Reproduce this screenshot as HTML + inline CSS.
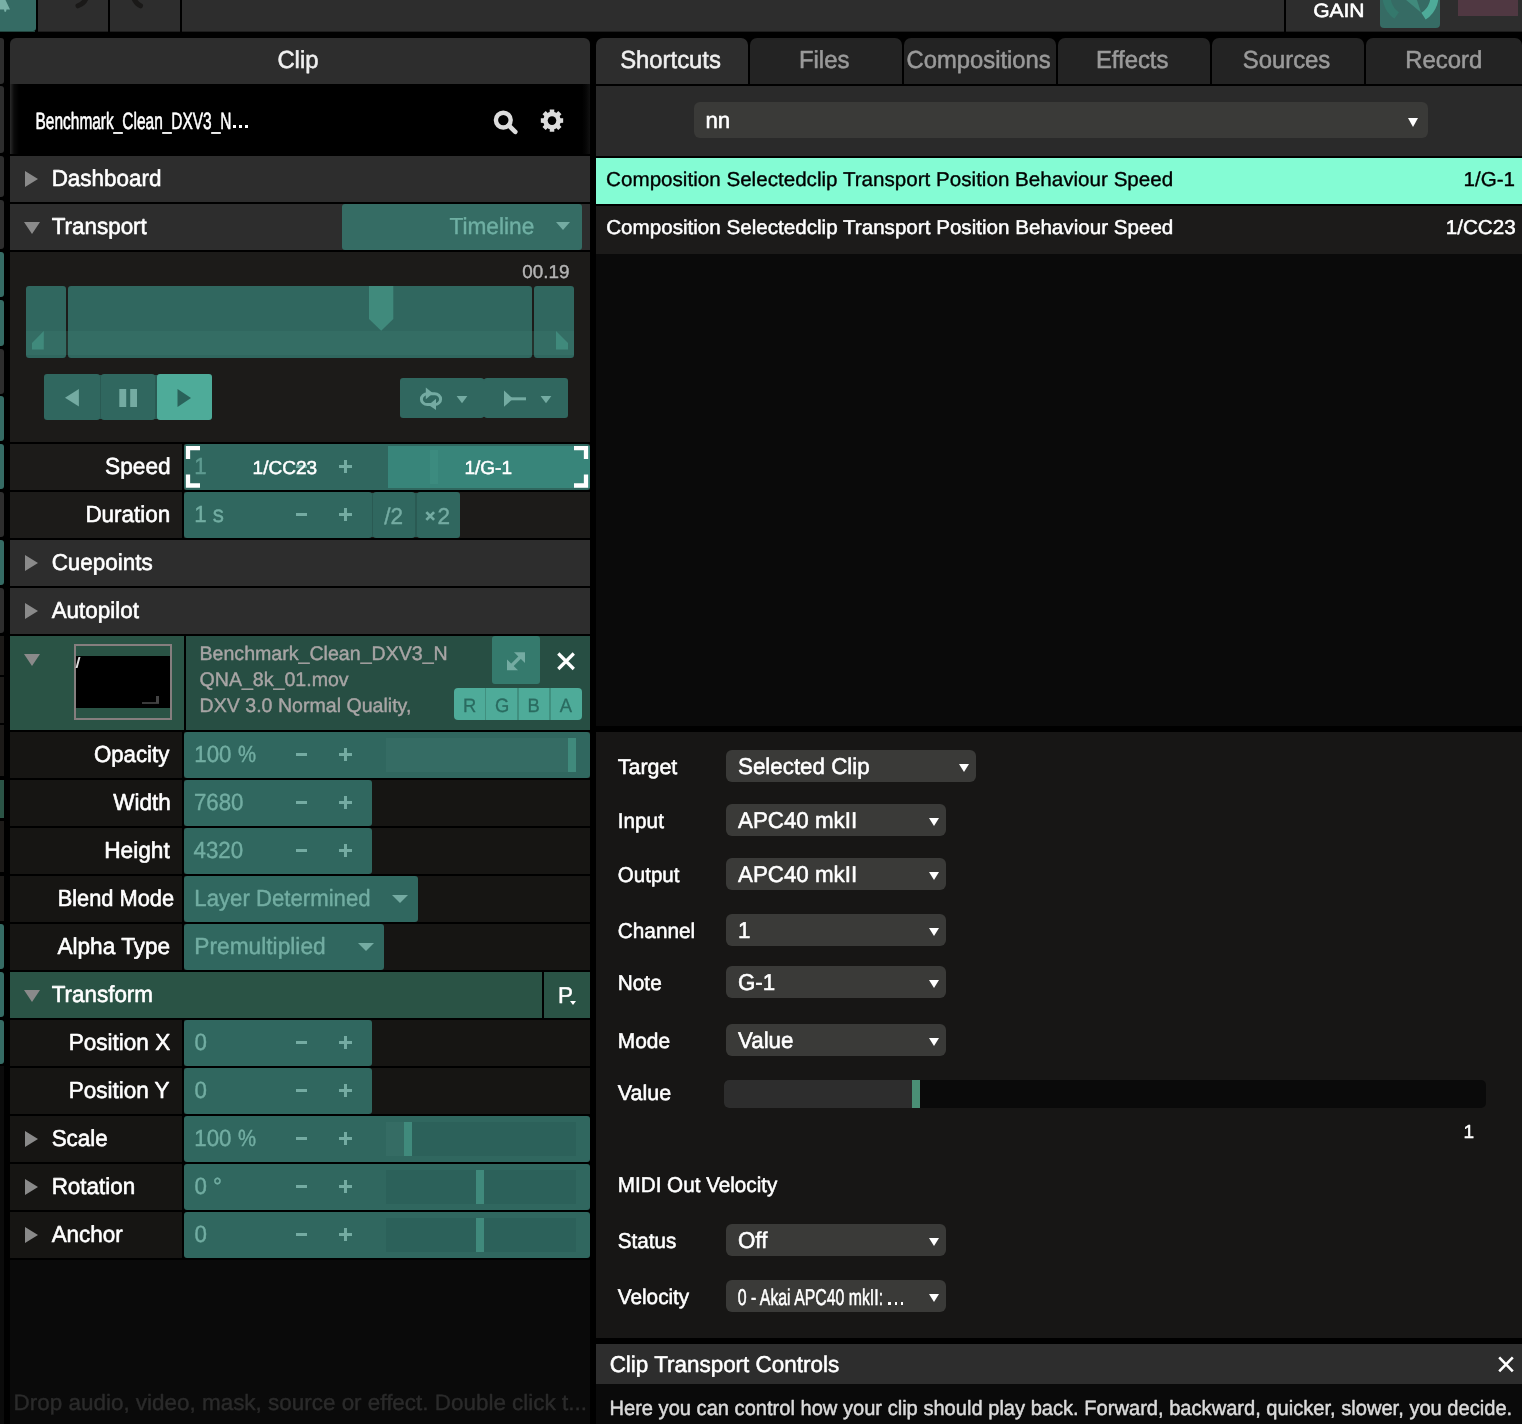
<!DOCTYPE html>
<html>
<head>
<meta charset="utf-8">
<title>Clip</title>
<style>
html,body{margin:0;padding:0;background:#000;}
body{width:1522px;height:1424px;position:relative;overflow:hidden;font-family:"Liberation Sans",sans-serif;}
.a{position:absolute;}
.tri-r{position:absolute;width:0;height:0;border-left:13px solid #8a8a8a;border-top:8px solid transparent;border-bottom:8px solid transparent;}
.tri-d{position:absolute;width:0;height:0;border-top:12px solid #8a8a8a;border-left:8px solid transparent;border-right:8px solid transparent;}
svg.tx{position:absolute;left:0;top:0;will-change:transform;font-family:"Liberation Sans",sans-serif;text-rendering:geometricPrecision;stroke-linejoin:round;}
svg.tx text{white-space:pre;}
</style>
</head>
<body>
<div class="a" style="left:0px;top:31px;width:35px;height:1px;background:#22463f;"></div>
<div class="a" style="left:0px;top:0px;width:36px;height:31px;background:#356b64;border-radius:0 0 3px 0;"></div>
<svg class="a" style="left:0;top:0" width="36" height="32"><path d="M0 0 L5.5 0 L10 9.5 L6.5 9.5 L6 11.8 L4.5 11.8 L4 9.5 L0 9.5 Z" fill="#78b0a6"/></svg>
<div class="a" style="left:38px;top:0px;width:70px;height:31px;background:#2d2d2d;"></div>
<div class="a" style="left:110px;top:0px;width:70px;height:31px;background:#2d2d2d;"></div>
<div class="a" style="left:182px;top:0px;width:1102px;height:31px;background:#2d2d2d;"></div>
<div class="a" style="left:1286px;top:0px;width:236px;height:31px;background:#2d2d2d;"></div>
<div class="a" style="left:38px;top:31px;width:70px;height:1px;background:#1d1d1d;"></div>
<div class="a" style="left:110px;top:31px;width:70px;height:1px;background:#1d1d1d;"></div>
<div class="a" style="left:182px;top:31px;width:1102px;height:1px;background:#1d1d1d;"></div>
<div class="a" style="left:1286px;top:31px;width:236px;height:1px;background:#1d1d1d;"></div>
<svg class="a" style="left:38px;top:0" width="144" height="32"><path d="M40 5.8 Q47 3 48.5 -3" stroke="#1a1918" stroke-width="5" fill="none" stroke-linecap="round"/><path d="M95.5 -3 Q97 3 102.5 5.8" stroke="#1a1918" stroke-width="5" fill="none" stroke-linecap="round"/></svg>
<div class="a" style="left:1380px;top:0;width:60px;height:28px;background:#366b64;border-radius:0 0 4px 4px;overflow:hidden;"><svg width="60" height="28"><path d="M16.63 15.59 A24 24 0 0 1 7.95 -12.2" stroke="#34786c" stroke-width="8" fill="none"/><path d="M43.5 16.17 A24 24 0 0 0 53.05 -12.2" stroke="#4eab99" stroke-width="8" fill="none"/><path d="M24.9 -1 L36.6 -1 L41 12.4 Z" fill="#408a7c"/></svg></div>
<div class="a" style="left:1458px;top:0px;width:60px;height:16px;background:#503842;"></div>
<div class="a" style="left:0px;top:38px;width:3.7px;height:46px;background:#2d2d2d;border-radius:0 3px 3px 0;"></div>
<div class="a" style="left:0px;top:86px;width:3.7px;height:67px;background:#2d2d2d;border-radius:0 3px 3px 0;"></div>
<div class="a" style="left:0px;top:156px;width:3.7px;height:41px;background:#2d2d2d;border-radius:0 3px 3px 0;"></div>
<div class="a" style="left:0px;top:200px;width:3.7px;height:49px;background:#2d2d2d;border-radius:0 3px 3px 0;"></div>
<div class="a" style="left:0px;top:252px;width:3.7px;height:45px;background:#356b64;border-radius:0 3px 3px 0;"></div>
<div class="a" style="left:0px;top:300px;width:3.7px;height:46px;background:#356b64;border-radius:0 3px 3px 0;"></div>
<div class="a" style="left:0px;top:349px;width:3.7px;height:45px;background:#2d2d2d;border-radius:0 3px 3px 0;"></div>
<div class="a" style="left:0px;top:396px;width:3.7px;height:45px;background:#356b64;border-radius:0 3px 3px 0;"></div>
<div class="a" style="left:0px;top:444px;width:3.7px;height:45px;background:#356b64;border-radius:0 3px 3px 0;"></div>
<div class="a" style="left:0px;top:492px;width:3.7px;height:45px;background:#2d2d2d;border-radius:0 3px 3px 0;"></div>
<div class="a" style="left:0px;top:540px;width:3.7px;height:45px;background:#356b64;border-radius:0 3px 3px 0;"></div>
<div class="a" style="left:0px;top:588px;width:3.7px;height:45px;background:#2d2d2d;border-radius:0 3px 3px 0;"></div>
<div class="a" style="left:0px;top:636px;width:3.7px;height:39px;background:#1c1a18;"></div>
<div class="a" style="left:0px;top:677px;width:3.7px;height:46px;background:#1c1a18;"></div>
<div class="a" style="left:0px;top:725px;width:3.7px;height:51px;background:#1c1a18;"></div>
<div class="a" style="left:0px;top:780px;width:3.7px;height:38px;background:#2a5345;"></div>
<div class="a" style="left:0px;top:821px;width:3.7px;height:51px;background:#1c1a18;"></div>
<div class="a" style="left:0px;top:876px;width:3.7px;height:45px;background:#1c1a18;"></div>
<div class="a" style="left:0px;top:924px;width:3.7px;height:45px;background:#356b64;border-radius:0 3px 3px 0;"></div>
<div class="a" style="left:0px;top:972px;width:3.7px;height:45px;background:#356b64;border-radius:0 3px 3px 0;"></div>
<div class="a" style="left:0px;top:1020px;width:3.7px;height:44px;background:#356b64;border-radius:0 3px 3px 0;"></div>
<div class="a" style="left:0px;top:1066px;width:3.7px;height:358px;background:#0b0b0b;"></div>
<div class="a" style="left:10px;top:38px;width:580px;height:46px;background:#2d2d2d;border-radius:6px 6px 0 0;"></div>
<div class="a" style="left:10px;top:84px;width:580px;height:70px;background:linear-gradient(90deg,#2a2a2a 0,#0a0a0a 4px,#000 9px,#000 572px,#060606 576px,#111 580px);"></div>
<div class="a" style="left:232.5px;top:125.1px;width:3.2px;height:3.0px;background:#fff;"></div>
<div class="a" style="left:238.9px;top:125.1px;width:3.2px;height:3.0px;background:#fff;"></div>
<div class="a" style="left:245.1px;top:125.1px;width:3.2px;height:3.0px;background:#fff;"></div>
<svg class="a" style="left:488px;top:104px" width="84" height="34"><circle cx="15.3" cy="16.1" r="7.4" fill="none" stroke="#dcdcdc" stroke-width="4.4"/><path d="M20.8 21.5 L27.3 27.8" stroke="#dcdcdc" stroke-width="4.6" stroke-linecap="round"/><path d="M61.71 8.31 L61.74 5.43 L66.26 5.43 L66.29 8.31 L68.24 9.12 L70.30 7.10 L73.50 10.30 L71.48 12.36 L72.29 14.31 L75.17 14.34 L75.17 18.86 L72.29 18.89 L71.48 20.84 L73.50 22.90 L70.30 26.10 L68.24 24.08 L66.29 24.89 L66.26 27.77 L61.74 27.77 L61.71 24.89 L59.76 24.08 L57.70 26.10 L54.50 22.90 L56.52 20.84 L55.71 18.89 L52.83 18.86 L52.83 14.34 L55.71 14.31 L56.52 12.36 L54.50 10.30 L57.70 7.10 L59.76 9.12 Z" fill="#dcdcdc"/><circle cx="64" cy="16.6" r="8.8" fill="#dcdcdc"/><circle cx="64" cy="16.6" r="4.3" fill="#000"/></svg>
<div class="a" style="left:10px;top:156px;width:580px;height:46px;background:#2d2d2d;"></div>
<i class="tri-r" style="left:25px;top:170.5px;"></i>
<div class="a" style="left:10px;top:204px;width:580px;height:46px;background:#2d2d2d;"></div>
<i class="tri-d" style="left:23.5px;top:222px;"></i>
<div class="a" style="left:342px;top:204px;width:240px;height:46px;background:#356c64;border-radius:3px;"></div>
<i class="a" style="left:556px;top:222px;width:0;height:0;border-top:8.2px solid #74aba2;border-left:7.8px solid transparent;border-right:7.8px solid transparent;"></i>
<div class="a" style="left:10px;top:252px;width:580px;height:190px;background:#1c1b19;"></div>
<div class="a" style="left:26px;top:286px;width:40px;height:72px;background:#30675f;border-radius:3px;"></div>
<div class="a" style="left:68px;top:286px;width:464px;height:72px;background:#30675f;border-radius:3px;"></div>
<div class="a" style="left:534px;top:286px;width:40px;height:72px;background:#30675f;border-radius:3px;"></div>
<div class="a" style="left:26px;top:331px;width:548px;height:23.5px;background:rgba(70,130,118,0.22);"></div>
<svg class="a" style="left:26px;top:286px" width="548" height="72"><path d="M343 0 L367.3 0 L367.3 33 L355.2 44.7 L343 33 Z" fill="#408a7c"/><path d="M6 63.6 L17.8 63.6 L17.8 45 L6 57 Z" fill="#408a7c"/><path d="M530 45 L542 57 L542 63.6 L530 63.6 Z" fill="#408a7c"/></svg>
<div class="a" style="left:90px;top:375px;width:80px;height:44px;background:#2a5a53;"></div>
<div class="a" style="left:44px;top:374px;width:55.6px;height:46px;background:#30675f;border-radius:3px;"></div>
<div class="a" style="left:101px;top:374px;width:54.4px;height:46px;background:#30675f;border-radius:3px;"></div>
<div class="a" style="left:156.8px;top:374px;width:55.2px;height:46px;background:#4eab99;border-radius:3px;"></div>
<svg class="a" style="left:44px;top:374px" width="170" height="46"><path d="M34.9 15 L34.9 32.6 L21 23.8 Z" fill="#74aba2"/><rect x="75.3" y="15" width="6.9" height="18" fill="#74aba2"/><rect x="86.2" y="15" width="6.8" height="18" fill="#74aba2"/><path d="M133.5 15 L147 24 L133.5 33 Z" fill="#2a625a"/></svg>
<div class="a" style="left:478px;top:379px;width:12px;height:38px;background:#2a5a53;"></div>
<div class="a" style="left:400px;top:378px;width:83.6px;height:40px;background:#30675f;border-radius:3px;"></div>
<div class="a" style="left:484.4px;top:378px;width:83.6px;height:40px;background:#30675f;border-radius:3px;"></div>
<svg class="a" style="left:400px;top:378px" width="168" height="40"><rect x="21.4" y="15.7" width="19.2" height="10.9" rx="6" ry="5.45" fill="none" stroke="#74aba2" stroke-width="3"/><path d="M25.8 9.4 L33 15.2 L25.8 21.2 Z" fill="#74aba2"/><path d="M36 20.8 L36 32.1 L28.6 27 Z" fill="#74aba2"/><path d="M56.6 18 L67.4 18 L62 25.2 Z" fill="#74aba2"/><path d="M104 12.6 L113 20.8 L104 28.8 Z" fill="#74aba2"/><rect x="111" y="19.3" width="15" height="3" fill="#74aba2"/><path d="M140.6 18 L151.4 18 L146 25.2 Z" fill="#74aba2"/></svg>
<div class="a" style="left:10px;top:444px;width:172px;height:46px;background:#1c1b19;"></div>
<div class="a" style="left:184px;top:444px;width:406px;height:46px;background:#1c1b19;"></div>
<div class="a" style="left:184px;top:444px;width:406px;height:46px;background:#30675f;border-radius:3px;"></div>
<div class="a" style="left:387.9px;top:446px;width:202px;height:41.8px;background:#38857a;"></div>
<div class="a" style="left:429.8px;top:450px;width:8.3px;height:34px;background:#3c8b7f;"></div>
<div class="a" style="left:296.1px;top:465.0px;width:11px;height:3px;background:#74aba2;"></div>
<div class="a" style="left:339.0px;top:465.0px;width:13px;height:3px;background:#74aba2;"></div>
<div class="a" style="left:344.0px;top:460.0px;width:3px;height:13px;background:#74aba2;"></div>
<svg class="a" style="left:184px;top:444px" width="406" height="46"><g fill="none" stroke="#fff" stroke-width="4.3"><path d="M16 4.2 L4 4.2 L4 15"/><path d="M4 30.4 L4 41.5 L16 41.5"/><path d="M390 4.2 L402 4.2 L402 15"/><path d="M402 30.4 L402 41.5 L390 41.5"/></g></svg>
<div class="a" style="left:10px;top:492px;width:172px;height:46px;background:#1c1b19;"></div>
<div class="a" style="left:184px;top:492px;width:406px;height:46px;background:#1c1b19;"></div>
<div class="a" style="left:366px;top:493px;width:56px;height:44px;background:#2a5a53;"></div>
<div class="a" style="left:184px;top:492px;width:188px;height:46px;background:#30675f;border-radius:3px;"></div>
<div class="a" style="left:295.9px;top:513.0px;width:11px;height:3px;background:#74aba2;"></div>
<div class="a" style="left:339.1px;top:513.0px;width:13px;height:3px;background:#74aba2;"></div>
<div class="a" style="left:344.1px;top:508.0px;width:3px;height:13px;background:#74aba2;"></div>
<div class="a" style="left:373px;top:492px;width:42.4px;height:46px;background:#30675f;border-radius:3px;"></div>
<div class="a" style="left:416.6px;top:492px;width:43.4px;height:46px;background:#30675f;border-radius:3px;"></div>
<svg class="a" style="left:420px;top:505px" width="20" height="22"><path d="M6.3 7.1 L14.1 14.9 M14.1 7.1 L6.3 14.9" stroke="#74aba2" stroke-width="2.7"/></svg>
<div class="a" style="left:10px;top:540px;width:580px;height:46px;background:#2d2d2d;"></div>
<i class="tri-r" style="left:25px;top:554.5px;"></i>
<div class="a" style="left:10px;top:588px;width:580px;height:46px;background:#2d2d2d;"></div>
<i class="tri-r" style="left:25px;top:602.5px;"></i>
<div class="a" style="left:10px;top:636px;width:174px;height:94px;background:#2a5345;"></div>
<div class="a" style="left:186px;top:636px;width:404px;height:94px;background:#274e43;"></div>
<i class="tri-d" style="left:24px;top:654px;"></i>
<div class="a" style="left:74px;top:644px;width:94px;height:72px;border:2px solid #857e7e;"><div class="a" style="left:0;top:10px;width:94px;height:52px;background:#000;"></div><div class="a" style="left:1px;top:11px;width:2px;height:11px;background:#ddd;transform:skewX(-15deg);"></div><div class="a" style="left:66px;top:56px;width:17px;height:2px;background:#3a3a3a;"></div><div class="a" style="left:80px;top:50px;width:2.5px;height:7px;background:#444;"></div></div>
<div class="a" style="left:492px;top:636px;width:48px;height:48px;background:#357a6d;border-radius:3px;"></div>
<svg class="a" style="left:492px;top:636px" width="100" height="50"><g fill="#74aba2"><path d="M33 16.2 L33 27 L22 16.2 Z"/><path d="M15 34.2 L15 23.4 L26 34.2 Z"/></g><path d="M18.5 30.7 L29.5 19.7" stroke="#74aba2" stroke-width="3.4"/><path d="M66.3 17.5 L81.8 33 M81.8 17.5 L66.3 33" stroke="#fff" stroke-width="3.2"/></svg>
<div class="a" style="left:454.3px;top:688px;width:127.6px;height:31.6px;background:#4eab99;border-radius:4px;"></div>
<div class="a" style="left:484.8px;top:688px;width:1.4px;height:31.6px;background:#40907f;"></div>
<div class="a" style="left:517.1999999999999px;top:688px;width:1.4px;height:31.6px;background:#40907f;"></div>
<div class="a" style="left:549.1999999999999px;top:688px;width:1.4px;height:31.6px;background:#40907f;"></div>
<div class="a" style="left:10px;top:732px;width:172px;height:46px;background:#161513;"></div>
<div class="a" style="left:184px;top:732px;width:406px;height:46px;background:#161513;"></div>
<div class="a" style="left:184px;top:732px;width:406px;height:46px;background:#30675f;border-radius:3px;"></div>
<div class="a" style="left:295.9px;top:753.0px;width:11px;height:3px;background:#74aba2;"></div>
<div class="a" style="left:339.1px;top:753.0px;width:13px;height:3px;background:#74aba2;"></div>
<div class="a" style="left:344.1px;top:748.0px;width:3px;height:13px;background:#74aba2;"></div>
<div class="a" style="left:385.6px;top:738px;width:190.4px;height:34px;background:#356c64;"></div>
<div class="a" style="left:567.7px;top:738px;width:8.2px;height:34px;background:#408a7c;"></div>
<div class="a" style="left:10px;top:780px;width:172px;height:46px;background:#161513;"></div>
<div class="a" style="left:184px;top:780px;width:406px;height:46px;background:#161513;"></div>
<div class="a" style="left:184px;top:780px;width:188px;height:46px;background:#30675f;border-radius:3px;"></div>
<div class="a" style="left:295.9px;top:801.0px;width:11px;height:3px;background:#74aba2;"></div>
<div class="a" style="left:339.1px;top:801.0px;width:13px;height:3px;background:#74aba2;"></div>
<div class="a" style="left:344.1px;top:796.0px;width:3px;height:13px;background:#74aba2;"></div>
<div class="a" style="left:10px;top:828px;width:172px;height:46px;background:#161513;"></div>
<div class="a" style="left:184px;top:828px;width:406px;height:46px;background:#161513;"></div>
<div class="a" style="left:184px;top:828px;width:188px;height:46px;background:#30675f;border-radius:3px;"></div>
<div class="a" style="left:295.9px;top:849.0px;width:11px;height:3px;background:#74aba2;"></div>
<div class="a" style="left:339.1px;top:849.0px;width:13px;height:3px;background:#74aba2;"></div>
<div class="a" style="left:344.1px;top:844.0px;width:3px;height:13px;background:#74aba2;"></div>
<div class="a" style="left:10px;top:876px;width:172px;height:46px;background:#161513;"></div>
<div class="a" style="left:184px;top:876px;width:406px;height:46px;background:#161513;"></div>
<div class="a" style="left:184px;top:876px;width:234px;height:46px;background:#30675f;border-radius:3px;"></div>
<i class="a" style="left:392px;top:894.5px;width:0;height:0;border-top:8px solid #74aba2;border-left:8px solid transparent;border-right:8px solid transparent;"></i>
<div class="a" style="left:10px;top:924px;width:172px;height:46px;background:#161513;"></div>
<div class="a" style="left:184px;top:924px;width:406px;height:46px;background:#161513;"></div>
<div class="a" style="left:184px;top:924px;width:199.5px;height:46px;background:#30675f;border-radius:3px;"></div>
<i class="a" style="left:357.5px;top:942.5px;width:0;height:0;border-top:8px solid #74aba2;border-left:8px solid transparent;border-right:8px solid transparent;"></i>
<div class="a" style="left:10px;top:972px;width:532px;height:46px;background:#2a5345;"></div>
<i class="tri-d" style="left:23.5px;top:990px;"></i>
<div class="a" style="left:544px;top:972px;width:46px;height:46px;background:#2a5345;"></div>
<i class="a" style="left:569.5px;top:1000.5px;width:0;height:0;border-top:4px solid #fff;border-left:3px solid transparent;border-right:3px solid transparent;"></i>
<div class="a" style="left:10px;top:1020px;width:172px;height:46px;background:#161513;"></div>
<div class="a" style="left:184px;top:1020px;width:406px;height:46px;background:#161513;"></div>
<div class="a" style="left:184px;top:1020px;width:188px;height:46px;background:#30675f;border-radius:3px;"></div>
<div class="a" style="left:295.9px;top:1041.0px;width:11px;height:3px;background:#74aba2;"></div>
<div class="a" style="left:339.1px;top:1041.0px;width:13px;height:3px;background:#74aba2;"></div>
<div class="a" style="left:344.1px;top:1036.0px;width:3px;height:13px;background:#74aba2;"></div>
<div class="a" style="left:10px;top:1068px;width:172px;height:46px;background:#161513;"></div>
<div class="a" style="left:184px;top:1068px;width:406px;height:46px;background:#161513;"></div>
<div class="a" style="left:184px;top:1068px;width:188px;height:46px;background:#30675f;border-radius:3px;"></div>
<div class="a" style="left:295.9px;top:1089.0px;width:11px;height:3px;background:#74aba2;"></div>
<div class="a" style="left:339.1px;top:1089.0px;width:13px;height:3px;background:#74aba2;"></div>
<div class="a" style="left:344.1px;top:1084.0px;width:3px;height:13px;background:#74aba2;"></div>
<div class="a" style="left:10px;top:1116px;width:172px;height:46px;background:#161513;"></div>
<i class="tri-r" style="left:25px;top:1130.5px;"></i>
<div class="a" style="left:184px;top:1116px;width:406px;height:46px;background:#30675f;border-radius:3px;"></div>
<div class="a" style="left:295.9px;top:1137.0px;width:11px;height:3px;background:#74aba2;"></div>
<div class="a" style="left:339.1px;top:1137.0px;width:13px;height:3px;background:#74aba2;"></div>
<div class="a" style="left:344.1px;top:1132.0px;width:3px;height:13px;background:#74aba2;"></div>
<div class="a" style="left:385.5px;top:1122px;width:190px;height:34px;background:#2c615a;"></div>
<div class="a" style="left:385.5px;top:1122px;width:18.5px;height:34px;background:#356c64;"></div>
<div class="a" style="left:404px;top:1122px;width:8.2px;height:34px;background:#408a7c;"></div>
<div class="a" style="left:10px;top:1164px;width:172px;height:46px;background:#161513;"></div>
<i class="tri-r" style="left:25px;top:1178.5px;"></i>
<div class="a" style="left:184px;top:1164px;width:406px;height:46px;background:#30675f;border-radius:3px;"></div>
<div class="a" style="left:295.9px;top:1185.0px;width:11px;height:3px;background:#74aba2;"></div>
<div class="a" style="left:339.1px;top:1185.0px;width:13px;height:3px;background:#74aba2;"></div>
<div class="a" style="left:344.1px;top:1180.0px;width:3px;height:13px;background:#74aba2;"></div>
<div class="a" style="left:385.5px;top:1170px;width:190px;height:34px;background:#2c615a;"></div>
<div class="a" style="left:475.8px;top:1170px;width:8.2px;height:34px;background:#408a7c;"></div>
<div class="a" style="left:10px;top:1212px;width:172px;height:46px;background:#161513;"></div>
<i class="tri-r" style="left:25px;top:1226.5px;"></i>
<div class="a" style="left:184px;top:1212px;width:406px;height:46px;background:#30675f;border-radius:3px;"></div>
<div class="a" style="left:295.9px;top:1233.0px;width:11px;height:3px;background:#74aba2;"></div>
<div class="a" style="left:339.1px;top:1233.0px;width:13px;height:3px;background:#74aba2;"></div>
<div class="a" style="left:344.1px;top:1228.0px;width:3px;height:13px;background:#74aba2;"></div>
<div class="a" style="left:385.5px;top:1218px;width:190px;height:34px;background:#2c615a;"></div>
<div class="a" style="left:475.8px;top:1218px;width:8.2px;height:34px;background:#408a7c;"></div>
<div class="a" style="left:10px;top:1260px;width:580px;height:164px;background:#0a0a0a;"></div>
<div class="a" style="left:596px;top:38px;width:152px;height:46px;background:#2d2d2d;border-radius:7px 7px 0 0;"></div>
<div class="a" style="left:750px;top:38px;width:152px;height:46px;background:#232323;border-radius:7px 7px 0 0;"></div>
<div class="a" style="left:904px;top:38px;width:152px;height:46px;background:#232323;border-radius:7px 7px 0 0;"></div>
<div class="a" style="left:1058px;top:38px;width:152px;height:46px;background:#232323;border-radius:7px 7px 0 0;"></div>
<div class="a" style="left:1212px;top:38px;width:152px;height:46px;background:#232323;border-radius:7px 7px 0 0;"></div>
<div class="a" style="left:1366px;top:38px;width:156px;height:46px;background:#232323;border-radius:7px 7px 0 0;"></div>
<div class="a" style="left:596px;top:86px;width:926px;height:70px;background:#2a2a2a;"></div>
<div class="a" style="left:694px;top:102px;width:733.7px;height:36px;background:#3a3a38;border-radius:6px;"></div>
<i class="a" style="left:1408px;top:117.5px;width:0;height:0;border-top:9px solid #fff;border-left:5.8px solid transparent;border-right:5.8px solid transparent;"></i>
<div class="a" style="left:596px;top:158px;width:926px;height:46px;background:#84fcd4;"></div>
<div class="a" style="left:596px;top:206px;width:926px;height:48px;background:#1c1b1a;"></div>
<div class="a" style="left:596px;top:254px;width:926px;height:472px;background:#0a0a0a;"></div>
<div class="a" style="left:596px;top:732px;width:926px;height:606px;background:#171615;"></div>
<div class="a" style="left:726px;top:750px;width:250px;height:32px;background:#3a3a38;border-radius:6px;"></div>
<i class="a" style="left:959px;top:764px;width:0;height:0;border-top:8px solid #fff;border-left:5px solid transparent;border-right:5px solid transparent;"></i>
<div class="a" style="left:726px;top:804px;width:220px;height:32px;background:#3a3a38;border-radius:6px;"></div>
<i class="a" style="left:929px;top:818px;width:0;height:0;border-top:8px solid #fff;border-left:5px solid transparent;border-right:5px solid transparent;"></i>
<div class="a" style="left:726px;top:858px;width:220px;height:32px;background:#3a3a38;border-radius:6px;"></div>
<i class="a" style="left:929px;top:872px;width:0;height:0;border-top:8px solid #fff;border-left:5px solid transparent;border-right:5px solid transparent;"></i>
<div class="a" style="left:726px;top:914px;width:220px;height:32px;background:#3a3a38;border-radius:6px;"></div>
<i class="a" style="left:929px;top:928px;width:0;height:0;border-top:8px solid #fff;border-left:5px solid transparent;border-right:5px solid transparent;"></i>
<div class="a" style="left:726px;top:966px;width:220px;height:32px;background:#3a3a38;border-radius:6px;"></div>
<i class="a" style="left:929px;top:980px;width:0;height:0;border-top:8px solid #fff;border-left:5px solid transparent;border-right:5px solid transparent;"></i>
<div class="a" style="left:726px;top:1024px;width:220px;height:32px;background:#3a3a38;border-radius:6px;"></div>
<i class="a" style="left:929px;top:1038px;width:0;height:0;border-top:8px solid #fff;border-left:5px solid transparent;border-right:5px solid transparent;"></i>
<div class="a" style="left:726px;top:1224px;width:220px;height:32px;background:#3a3a38;border-radius:6px;"></div>
<i class="a" style="left:929px;top:1238px;width:0;height:0;border-top:8px solid #fff;border-left:5px solid transparent;border-right:5px solid transparent;"></i>
<div class="a" style="left:726px;top:1280px;width:220px;height:32px;background:#3a3a38;border-radius:6px;"></div>
<i class="a" style="left:929px;top:1294px;width:0;height:0;border-top:8px solid #fff;border-left:5px solid transparent;border-right:5px solid transparent;"></i>
<div class="a" style="left:888.4px;top:1302.4px;width:2.3px;height:2.5px;background:#fff;"></div>
<div class="a" style="left:894.5px;top:1302.4px;width:2.3px;height:2.5px;background:#fff;"></div>
<div class="a" style="left:900.6999999999999px;top:1302.4px;width:2.3px;height:2.5px;background:#fff;"></div>
<div class="a" style="left:724px;top:1080px;width:762px;height:28px;background:#0a0a0a;border-radius:5px;overflow:hidden;"><div class="a" style="left:0;top:0;width:188px;height:28px;background:#2d2d2d;"></div><div class="a" style="left:187.8px;top:0;width:8.2px;height:28px;background:#4a8f75;"></div></div>
<div class="a" style="left:596px;top:1344px;width:926px;height:40px;background:#2d2d2d;"></div>
<svg class="a" style="left:1496px;top:1354px" width="20" height="20"><path d="M3.2 3.4 L16.8 17.4 M16.8 3.4 L3.2 17.4" stroke="#fff" stroke-width="2.6"/></svg>
<div class="a" style="left:596px;top:1384px;width:926px;height:40px;background:#0a0a0a;"></div>
<svg class="tx" width="1522" height="1424" xml:space="preserve">
<text x="1313.15" y="17.40" font-size="19.23" textLength="51.43" lengthAdjust="spacingAndGlyphs" fill="#fff" stroke="#fff" stroke-width="0.6">GAIN</text>
<text x="277.38" y="68.00" font-size="24.63" textLength="41.08" lengthAdjust="spacingAndGlyphs" fill="#f0f0f0" stroke="#f0f0f0" stroke-width="0.55">Clip</text>
<text x="35.56" y="129.00" font-size="23.62" textLength="195.93" lengthAdjust="spacingAndGlyphs" fill="#fff" stroke="#fff" stroke-width="0.6">Benchmark_Clean_DXV3_N</text>
<text x="51.66" y="186.00" font-size="23.01" textLength="109.75" lengthAdjust="spacingAndGlyphs" fill="#fff" stroke="#fff" stroke-width="0.6">Dashboard</text>
<text x="51.66" y="234.00" font-size="23.01" textLength="95.17" lengthAdjust="spacingAndGlyphs" fill="#fff" stroke="#fff" stroke-width="0.6">Transport</text>
<text x="449.46" y="234.00" font-size="23.11" textLength="84.80" lengthAdjust="spacingAndGlyphs" fill="#6fafa3" stroke="#6fafa3" stroke-width="0.42">Timeline</text>
<text x="522.26" y="278.00" font-size="18.70" textLength="47.23" lengthAdjust="spacingAndGlyphs" fill="#b4b4b4" stroke="#b4b4b4" stroke-width="0.42">00.19</text>
<text x="105.08" y="474.00" font-size="23.15" textLength="65.53" lengthAdjust="spacingAndGlyphs" fill="#fff" stroke="#fff" stroke-width="0.6">Speed</text>
<text x="194.14" y="474.00" font-size="23.35" textLength="12.39" lengthAdjust="spacingAndGlyphs" fill="#5e9a90" stroke="#5e9a90" stroke-width="0.42">1</text>
<text x="252.62" y="474.00" font-size="18.74" textLength="64.50" lengthAdjust="spacingAndGlyphs" fill="#fff" stroke="#fff" stroke-width="0.5">1/CC23</text>
<text x="464.42" y="474.00" font-size="18.74" textLength="47.57" lengthAdjust="spacingAndGlyphs" fill="#fff" stroke="#fff" stroke-width="0.5">1/G-1</text>
<text x="85.40" y="522.00" font-size="23.15" textLength="84.96" lengthAdjust="spacingAndGlyphs" fill="#fff" stroke="#fff" stroke-width="0.6">Duration</text>
<text x="194.14" y="522.00" font-size="23.35" textLength="29.73" lengthAdjust="spacingAndGlyphs" fill="#72ada2" stroke="#72ada2" stroke-width="0.42">1 s</text>
<text x="384.31" y="524.00" font-size="22.83" textLength="18.78" lengthAdjust="spacingAndGlyphs" fill="#74aba2" stroke="#74aba2" stroke-width="0.42">/2</text>
<text x="437.42" y="524.00" font-size="22.83" textLength="12.53" lengthAdjust="spacingAndGlyphs" fill="#74aba2" stroke="#74aba2" stroke-width="0.42">2</text>
<text x="51.66" y="570.00" font-size="23.01" textLength="101.02" lengthAdjust="spacingAndGlyphs" fill="#fff" stroke="#fff" stroke-width="0.6">Cuepoints</text>
<text x="51.66" y="618.00" font-size="23.01" textLength="87.31" lengthAdjust="spacingAndGlyphs" fill="#fff" stroke="#fff" stroke-width="0.6">Autopilot</text>
<text x="199.54" y="660.00" font-size="19.62" textLength="248.19" lengthAdjust="spacingAndGlyphs" fill="#a8a5a5" stroke="#a8a5a5" stroke-width="0.42">Benchmark_Clean_DXV3_N</text>
<text x="199.54" y="686.00" font-size="19.62" textLength="149.12" lengthAdjust="spacingAndGlyphs" fill="#a8a5a5" stroke="#a8a5a5" stroke-width="0.42">QNA_8k_01.mov</text>
<text x="199.54" y="712.00" font-size="19.62" textLength="211.86" lengthAdjust="spacingAndGlyphs" fill="#a8a5a5" stroke="#a8a5a5" stroke-width="0.42">DXV 3.0 Normal Quality,</text>
<text x="462.97" y="712.00" font-size="19.33" textLength="13.26" lengthAdjust="spacingAndGlyphs" fill="#2a6b60" stroke="#2a6b60" stroke-width="0.3">R</text>
<text x="494.97" y="712.00" font-size="19.33" textLength="14.28" lengthAdjust="spacingAndGlyphs" fill="#2a6b60" stroke="#2a6b60" stroke-width="0.3">G</text>
<text x="527.52" y="712.00" font-size="19.33" textLength="12.25" lengthAdjust="spacingAndGlyphs" fill="#2a6b60" stroke="#2a6b60" stroke-width="0.3">B</text>
<text x="559.75" y="712.00" font-size="19.33" textLength="12.25" lengthAdjust="spacingAndGlyphs" fill="#2a6b60" stroke="#2a6b60" stroke-width="0.3">A</text>
<text x="93.90" y="762.00" font-size="23.15" textLength="75.42" lengthAdjust="spacingAndGlyphs" fill="#fff" stroke="#fff" stroke-width="0.6">Opacity</text>
<text x="194.34" y="762.00" font-size="23.35" textLength="37.18" lengthAdjust="spacingAndGlyphs" fill="#72ada2" stroke="#72ada2" stroke-width="0.42">100</text>
<text x="238.03" y="762.00" font-size="23.35" textLength="18.09" lengthAdjust="spacingAndGlyphs" fill="#72ada2" stroke="#72ada2" stroke-width="0.42">%</text>
<text x="113.29" y="810.00" font-size="23.15" textLength="57.40" lengthAdjust="spacingAndGlyphs" fill="#fff" stroke="#fff" stroke-width="0.6">Width</text>
<text x="193.90" y="810.00" font-size="23.35" textLength="49.58" lengthAdjust="spacingAndGlyphs" fill="#72ada2" stroke="#72ada2" stroke-width="0.42">7680</text>
<text x="104.18" y="858.00" font-size="23.15" textLength="65.65" lengthAdjust="spacingAndGlyphs" fill="#fff" stroke="#fff" stroke-width="0.6">Height</text>
<text x="193.55" y="858.00" font-size="23.35" textLength="49.58" lengthAdjust="spacingAndGlyphs" fill="#72ada2" stroke="#72ada2" stroke-width="0.42">4320</text>
<text x="57.65" y="906.00" font-size="23.15" textLength="116.47" lengthAdjust="spacingAndGlyphs" fill="#fff" stroke="#fff" stroke-width="0.6">Blend Mode</text>
<text x="194.34" y="906.00" font-size="23.35" textLength="176.27" lengthAdjust="spacingAndGlyphs" fill="#72ada2" stroke="#72ada2" stroke-width="0.42">Layer Determined</text>
<text x="57.39" y="954.00" font-size="23.15" textLength="112.84" lengthAdjust="spacingAndGlyphs" fill="#fff" stroke="#fff" stroke-width="0.6">Alpha Type</text>
<text x="194.29" y="954.00" font-size="23.35" textLength="131.39" lengthAdjust="spacingAndGlyphs" fill="#72ada2" stroke="#72ada2" stroke-width="0.42">Premultiplied</text>
<text x="51.66" y="1002.00" font-size="23.01" textLength="101.38" lengthAdjust="spacingAndGlyphs" fill="#fff" stroke="#fff" stroke-width="0.6">Transform</text>
<text x="558.06" y="1003.00" font-size="23.01" textLength="14.96" lengthAdjust="spacingAndGlyphs" fill="#fff" stroke="#fff" stroke-width="0.5">P</text>
<text x="68.70" y="1050.00" font-size="23.15" textLength="101.51" lengthAdjust="spacingAndGlyphs" fill="#fff" stroke="#fff" stroke-width="0.6">Position X</text>
<text x="194.52" y="1050.00" font-size="23.35" textLength="12.39" lengthAdjust="spacingAndGlyphs" fill="#72ada2" stroke="#72ada2" stroke-width="0.42">0</text>
<text x="68.70" y="1098.00" font-size="23.15" textLength="100.94" lengthAdjust="spacingAndGlyphs" fill="#fff" stroke="#fff" stroke-width="0.6">Position Y</text>
<text x="194.52" y="1098.00" font-size="23.35" textLength="12.39" lengthAdjust="spacingAndGlyphs" fill="#72ada2" stroke="#72ada2" stroke-width="0.42">0</text>
<text x="51.66" y="1146.00" font-size="23.01" textLength="56.12" lengthAdjust="spacingAndGlyphs" fill="#fff" stroke="#fff" stroke-width="0.6">Scale</text>
<text x="194.34" y="1146.00" font-size="23.35" textLength="37.18" lengthAdjust="spacingAndGlyphs" fill="#72ada2" stroke="#72ada2" stroke-width="0.42">100</text>
<text x="51.66" y="1194.00" font-size="23.01" textLength="83.56" lengthAdjust="spacingAndGlyphs" fill="#fff" stroke="#fff" stroke-width="0.6">Rotation</text>
<text x="194.52" y="1194.00" font-size="23.35" textLength="27.50" lengthAdjust="spacingAndGlyphs" fill="#72ada2" stroke="#72ada2" stroke-width="0.42">0 °</text>
<text x="51.66" y="1242.00" font-size="23.01" textLength="71.08" lengthAdjust="spacingAndGlyphs" fill="#fff" stroke="#fff" stroke-width="0.6">Anchor</text>
<text x="194.52" y="1242.00" font-size="23.35" textLength="12.39" lengthAdjust="spacingAndGlyphs" fill="#72ada2" stroke="#72ada2" stroke-width="0.42">0</text>
<text x="238.03" y="1146.00" font-size="23.35" textLength="18.09" lengthAdjust="spacingAndGlyphs" fill="#72ada2" stroke="#72ada2" stroke-width="0.42">%</text>
<text x="13.61" y="1410.00" font-size="22.24" textLength="573.31" lengthAdjust="spacingAndGlyphs" fill="#2b2b2b" stroke="#2b2b2b" stroke-width="0.42">Drop audio, video, mask, source or effect. Double click t...</text>
<text x="620.20" y="68.00" font-size="24.63" textLength="100.74" lengthAdjust="spacingAndGlyphs" fill="#f0f0f0" stroke="#f0f0f0" stroke-width="0.55">Shortcuts</text>
<text x="799.00" y="68.00" font-size="24.63" textLength="50.35" lengthAdjust="spacingAndGlyphs" fill="#9a9a9a" stroke="#9a9a9a" stroke-width="0.55">Files</text>
<text x="906.59" y="68.00" font-size="24.63" textLength="144.13" lengthAdjust="spacingAndGlyphs" fill="#9a9a9a" stroke="#9a9a9a" stroke-width="0.55">Compositions</text>
<text x="1095.91" y="68.00" font-size="24.63" textLength="72.46" lengthAdjust="spacingAndGlyphs" fill="#9a9a9a" stroke="#9a9a9a" stroke-width="0.55">Effects</text>
<text x="1242.82" y="68.00" font-size="24.63" textLength="87.49" lengthAdjust="spacingAndGlyphs" fill="#9a9a9a" stroke="#9a9a9a" stroke-width="0.55">Sources</text>
<text x="1405.27" y="68.00" font-size="24.63" textLength="76.88" lengthAdjust="spacingAndGlyphs" fill="#9a9a9a" stroke="#9a9a9a" stroke-width="0.55">Record</text>
<text x="705.42" y="128.00" font-size="22.90" textLength="24.86" lengthAdjust="spacingAndGlyphs" fill="#fff" stroke="#fff" stroke-width="0.55">nn</text>
<text x="606.14" y="186.00" font-size="20.01" textLength="567.10" lengthAdjust="spacingAndGlyphs" fill="#000" stroke="#000" stroke-width="0.35">Composition Selectedclip Transport Position Behaviour Speed</text>
<text x="1463.53" y="186.00" font-size="20.01" textLength="51.54" lengthAdjust="spacingAndGlyphs" fill="#000" stroke="#000" stroke-width="0.35">1/G-1</text>
<text x="606.22" y="234.00" font-size="20.01" textLength="567.10" lengthAdjust="spacingAndGlyphs" fill="#fff" stroke="#fff" stroke-width="0.5">Composition Selectedclip Transport Position Behaviour Speed</text>
<text x="1445.81" y="234.00" font-size="20.01" textLength="69.88" lengthAdjust="spacingAndGlyphs" fill="#fff" stroke="#fff" stroke-width="0.5">1/CC23</text>
<text x="617.75" y="774.00" font-size="21.37" textLength="59.58" lengthAdjust="spacingAndGlyphs" fill="#fff" stroke="#fff" stroke-width="0.55">Target</text>
<text x="737.97" y="774.00" font-size="22.90" textLength="131.70" lengthAdjust="spacingAndGlyphs" fill="#fff" stroke="#fff" stroke-width="0.55">Selected Clip</text>
<text x="617.81" y="828.00" font-size="21.37" textLength="46.10" lengthAdjust="spacingAndGlyphs" fill="#fff" stroke="#fff" stroke-width="0.55">Input</text>
<text x="737.97" y="828.00" font-size="22.90" textLength="119.25" lengthAdjust="spacingAndGlyphs" fill="#fff" stroke="#fff" stroke-width="0.55">APC40 mkII</text>
<text x="617.79" y="882.00" font-size="21.37" textLength="61.68" lengthAdjust="spacingAndGlyphs" fill="#fff" stroke="#fff" stroke-width="0.55">Output</text>
<text x="737.97" y="882.00" font-size="22.90" textLength="119.25" lengthAdjust="spacingAndGlyphs" fill="#fff" stroke="#fff" stroke-width="0.55">APC40 mkII</text>
<text x="617.78" y="938.00" font-size="21.37" textLength="77.40" lengthAdjust="spacingAndGlyphs" fill="#fff" stroke="#fff" stroke-width="0.55">Channel</text>
<text x="737.97" y="938.00" font-size="22.90" textLength="12.43" lengthAdjust="spacingAndGlyphs" fill="#fff" stroke="#fff" stroke-width="0.55">1</text>
<text x="617.80" y="990.00" font-size="21.37" textLength="43.91" lengthAdjust="spacingAndGlyphs" fill="#fff" stroke="#fff" stroke-width="0.55">Note</text>
<text x="737.97" y="990.00" font-size="22.90" textLength="37.26" lengthAdjust="spacingAndGlyphs" fill="#fff" stroke="#fff" stroke-width="0.55">G-1</text>
<text x="617.79" y="1048.00" font-size="21.37" textLength="52.31" lengthAdjust="spacingAndGlyphs" fill="#fff" stroke="#fff" stroke-width="0.55">Mode</text>
<text x="737.97" y="1048.00" font-size="22.90" textLength="55.51" lengthAdjust="spacingAndGlyphs" fill="#fff" stroke="#fff" stroke-width="0.55">Value</text>
<text x="617.78" y="1248.00" font-size="21.37" textLength="58.57" lengthAdjust="spacingAndGlyphs" fill="#fff" stroke="#fff" stroke-width="0.55">Status</text>
<text x="737.97" y="1248.00" font-size="22.90" textLength="29.40" lengthAdjust="spacingAndGlyphs" fill="#fff" stroke="#fff" stroke-width="0.55">Off</text>
<text x="617.75" y="1304.00" font-size="21.37" textLength="71.51" lengthAdjust="spacingAndGlyphs" fill="#fff" stroke="#fff" stroke-width="0.55">Velocity</text>
<text x="737.84" y="1305.00" font-size="22.90" textLength="145.22" lengthAdjust="spacingAndGlyphs" fill="#fff" stroke="#fff" stroke-width="0.55">0 - Akai APC40 mkII:</text>
<text x="617.75" y="1100.00" font-size="21.37" textLength="53.32" lengthAdjust="spacingAndGlyphs" fill="#fff" stroke="#fff" stroke-width="0.55">Value</text>
<text x="1463.64" y="1138.00" font-size="18.74" textLength="10.58" lengthAdjust="spacingAndGlyphs" fill="#fff" stroke="#fff" stroke-width="0.5">1</text>
<text x="617.81" y="1192.00" font-size="21.37" textLength="159.51" lengthAdjust="spacingAndGlyphs" fill="#fff" stroke="#fff" stroke-width="0.55">MIDI Out Velocity</text>
<text x="609.65" y="1372.00" font-size="22.76" textLength="229.49" lengthAdjust="spacingAndGlyphs" fill="#fff" stroke="#fff" stroke-width="0.55">Clip Transport Controls</text>
<text x="609.44" y="1415.00" font-size="20.71" textLength="902.76" lengthAdjust="spacingAndGlyphs" fill="#dadada" stroke="#dadada" stroke-width="0.5">Here you can control how your clip should play back. Forward, backward, quicker, slower, you decide.</text>
</svg>
</body>
</html>
